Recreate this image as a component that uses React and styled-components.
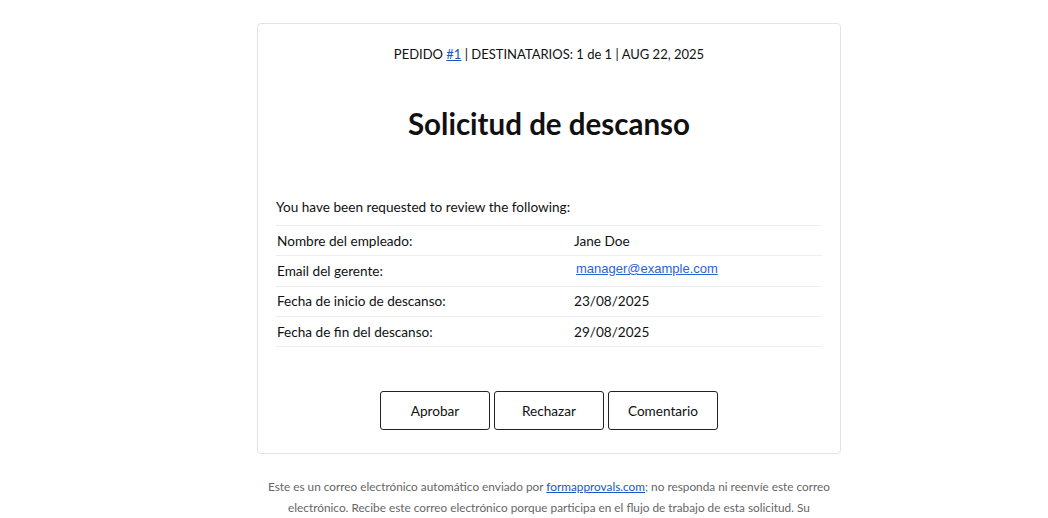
import React from 'react';
import styled, { createGlobalStyle } from 'styled-components';

const GlobalStyle = createGlobalStyle`
  body {
    margin: 0;
    background: #ffffff;
    font-family: Lato, "Noto Sans", sans-serif;
    color: #111;
  }
`;

const Page = styled.div`
  display: flex;
  flex-direction: column;
  align-items: center;
  padding: 23px 0 0 50px;
`;

const Card = styled.div`
  width: 584px;
  box-sizing: border-box;
  border: 1px solid #e3e3e3;
  border-radius: 4px;
  padding: 20px 18px 23px 18px;
`;

const Meta = styled.div`
  text-align: center;
  font-size: 13px;
  line-height: 20px;
  color: #111;
`;

const Link = styled.a`
  color: #1a56c4;
  text-decoration: underline;
`;

const Title = styled.h1`
  margin: 40px 0 0;
  text-align: center;
  font-size: 29.5px;
  line-height: 40px;
  font-weight: 700;
`;

const Intro = styled.div`
  margin-top: 53px;
  font-size: 13.6px;
  line-height: 20px;
  padding-bottom: 8px;
  border-bottom: 1px solid #eeeeee;
`;

const Table = styled.div`
  display: flex;
  flex-direction: column;
`;

const Row = styled.div`
  display: grid;
  grid-template-columns: 298px 1fr;
  height: 29.3px;
  align-items: center;
  border-bottom: 1px solid #eeeeee;
  font-size: 13.6px;
`;

const Label = styled.div`
  padding-left: 1px;
`;

const Value = styled.div``;

const EmailLink = styled.a`
  font-family: "Liberation Sans", Arial, sans-serif;
  font-size: 13px;
  color: #2a63d4;
  text-decoration: underline;
  margin-left: 2px;
  position: relative;
  top: -3px;
`;

const Actions = styled.div`
  display: flex;
  justify-content: center;
  gap: 4px;
  margin-top: 44px;
`;

const Button = styled.button`
  width: 110px;
  height: 39px;
  box-sizing: border-box;
  border: 1px solid #222;
  border-radius: 3px;
  background: #fff;
  font-family: inherit;
  font-size: 13.6px;
  color: #111;
  cursor: pointer;
`;

const Footer = styled.p`
  width: 584px;
  margin: 22px 0 0;
  text-align: center;
  font-size: 11.8px;
  line-height: 21px;
  color: #666;
`;

const rows = [
  ['Nombre del empleado:', 'Jane Doe'],
  ['Email del gerente:', null],
  ['Fecha de inicio de descanso:', '23/08/2025'],
  ['Fecha de fin del descanso:', '29/08/2025'],
];

export default function App() {
  return (
    <>
      <GlobalStyle />
      <Page>
        <Card>
          <Meta>
            PEDIDO <Link href="#">#1</Link> | DESTINATARIOS: 1 de 1 | AUG 22, 2025
          </Meta>
          <Title>Solicitud de descanso</Title>
          <Intro>You have been requested to review the following:</Intro>
          <Table>
            {rows.map(([label, value]) => (
              <Row key={label}>
                <Label>{label}</Label>
                <Value>
                  {value || <EmailLink href="#">manager@example.com</EmailLink>}
                </Value>
              </Row>
            ))}
          </Table>
          <Actions>
            <Button>Aprobar</Button>
            <Button>Rechazar</Button>
            <Button>Comentario</Button>
          </Actions>
        </Card>
        <Footer>
          Este es un correo electrónico automático enviado por{' '}
          <Link href="#">formapprovals.com</Link>; no responda ni reenvíe este correo
          electrónico. Recibe este correo electrónico porque participa en el flujo de
          trabajo de esta solicitud. Su
        </Footer>
      </Page>
    </>
  );
}
